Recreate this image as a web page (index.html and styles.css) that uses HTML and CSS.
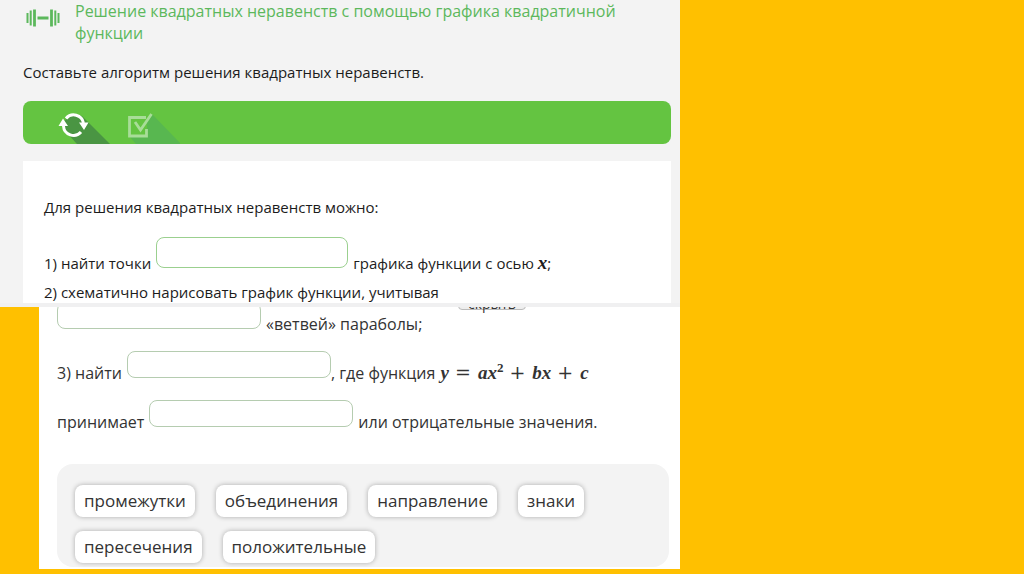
FILE: index.html
```html
<!DOCTYPE html>
<html lang="ru">
<head>
  <meta charset="utf-8">
  <meta name="viewport" content="width=device-width, initial-scale=1.0">
  <title>Решение квадратных неравенств</title>
  <link rel="stylesheet" href="styles.css">
</head>
<body>
  <main class="slide">
    <!-- Задание -->
    <section class="task">
      <header class="task__header">
        <svg class="task__icon" viewBox="0 0 34 18" aria-hidden="true">
          <path d="M1.5 4v10M4.7 1.5v15M29.3 1.5v15M32.5 4v10" />
          <path class="task__grip" d="M8.5 0.5v17M25.5 0.5v17M11.5 9h11" />
        </svg>
        <h1 class="task__title">Решение квадратных неравенств с помощью графика квадратичной функции</h1>
      </header>

      <p class="task__lead">Составьте алгоритм решения квадратных неравенств.</p>

      <div class="toolbar">
        <button class="toolbar__btn" type="button" aria-label="Сбросить">
          <svg viewBox="0 0 54 43" aria-hidden="true">
            <path class="shade-dark" d="M7 29L7 20L16 13L25 15L31 21L53 43H20z" />
            <path class="arc" d="M9 17.5A10 10 0 0 1 26.5 22M24 31A10 10 0 0 1 6.5 25" />
            <path class="tip" d="M1.5 25L6 17.5L11 25zM22 21.5H31.5L27 29z" />
          </svg>
        </button>
        <button class="toolbar__btn" type="button" aria-label="Проверить">
          <svg viewBox="0 0 54 43" aria-hidden="true">
            <path class="shade-light" d="M3 35L26 13L55 43H10z" />
            <path class="check-bg" d="M3 16H21V35H3z" />
            <path class="check" d="M20 16.5H3.5v18.5H20.5V28M9 21L14.5 29L25.5 13" />
          </svg>
        </button>
      </div>

      <div class="card">
        <p class="card__intro">Для решения квадратных неравенств можно:</p>
        <div class="row">
          <label for="gap1">1) найти точки</label>
          <input class="gap" id="gap1" type="text">
          <span>графика функции с осью <i class="var">x</i>;</span>
        </div>
        <p class="card__next">2) схематично нарисовать график функции, учитывая</p>
      </div>
    </section>

    <!-- Продолжение -->
    <section class="rest">
      <button class="rest__hide" type="button">скрыть</button>
      <div class="row">
        <input class="gap" type="text" aria-label="пропуск 2">
        <span>«ветвей» параболы;</span>
      </div>
      <div class="row">
        <label for="gap3">3) найти</label>
        <input class="gap" id="gap3" type="text">
        <span class="tight">, где функция <span class="math"><i>y</i><b>=</b><i>ax</i><sup>2</sup><b>+</b><i>bx</i><b>+</b><i>c</i></span></span>
      </div>
      <div class="row">
        <label for="gap4">принимает</label>
        <input class="gap" id="gap4" type="text">
        <span>или отрицательные значения.</span>
      </div>

      <div class="bank">
        <button class="chip" type="button">промежутки</button>
        <button class="chip" type="button">объединения</button>
        <button class="chip" type="button">направление</button>
        <button class="chip" type="button">знаки</button>
        <button class="chip" type="button">пересечения</button>
        <button class="chip" type="button">положительные</button>
      </div>
    </section>
  </main>
</body>
</html>
```
FILE: styles.css
```css
* {
  margin: 0;
  padding: 0;
  box-sizing: border-box;
}

:root {
  --green: #64c441;
  --grey: #f3f3f3;
}

body {
  min-height: 100vh;
  background: #ffc000;
  color: #1c1c1c;
  font-family: "Open Sans", "Noto Sans", sans-serif;
  font-size: 15px;
  line-height: 22px;
}

button,
input {
  font: inherit;
  color: inherit;
}

.slide {
  width: 66.4%;
}

/* ===== Задание ===== */
.task {
  padding: 0 9px 0 23px;
  background: var(--grey);
  border-bottom: 4px solid #f0f0f1;
}

.task__header {
  display: flex;
  gap: 15px;
  padding-left: 3px;
}

.task__icon {
  flex: none;
  width: 34px;
  height: 18px;
  margin-top: 9px;
  fill: none;
  stroke: #5cb85c;
  stroke-width: 2;
}

.task__grip {
  stroke-width: 2.8;
}

.task__title {
  color: #5cb85c;
  font-size: 16px;
  font-weight: 400;
}

.task__lead {
  margin: 17px 0 18px;
}

.toolbar {
  display: flex;
  gap: 15px;
  height: 43px;
  padding-left: 34px;
  border-radius: 8px;
  background: var(--green);
  overflow: hidden;
}

.toolbar__btn {
  width: 54px;
  border: 0;
  background: none;
}

.toolbar__btn svg {
  display: block;
  width: 54px;
  height: 43px;
}

.shade-dark { fill: #4a9543; }
.shade-light { fill: #58b750; }
.check-bg { fill: var(--green); }
.tip { fill: #fff; }

.arc {
  fill: none;
  stroke: #fff;
  stroke-width: 3;
}

.check {
  fill: none;
  stroke: #a8dd98;
  stroke-width: 2.8;
}

.card {
  margin-top: 17px;
  padding: 35px 21px 0;
  background: #fff;
}

.card__intro {
  margin-bottom: 19px;
}

.card__next {
  margin-top: 7px;
}

/* ===== Строки с пропусками ===== */
.row {
  display: flex;
  align-items: flex-end;
  gap: 5px;
  white-space: nowrap;
}

.gap {
  width: 192px;
  height: 31px;
  margin-bottom: 6px;
  padding: 0 8px;
  border: 1px solid #9bd08f;
  border-radius: 8px;
  background: #fff;
}

.var {
  font-family: "Liberation Serif", serif;
  font-size: 19px;
  font-weight: 700;
  line-height: 1;
}

/* ===== Продолжение ===== */
.rest {
  position: relative;
  margin-left: 39px;
  padding: 0 11px 2px 18px;
  background: #fff;
  color: #333;
  font-size: 16px;
  overflow: hidden;
}

.rest .row {
  margin-bottom: 16px;
}

.rest .row:first-of-type {
  margin-top: -5px;
}

.rest .gap {
  width: 204px;
  height: 27px;
  border-color: #b5ccb0;
}

.rest__hide {
  position: absolute;
  top: -19px;
  left: 419px;
  width: 68px;
  height: 22px;
  padding-top: 5px;
  border: 1px solid #bbb;
  border-radius: 4px;
  background: #eee;
  font-size: 14px;
  line-height: 20px;
}

.tight {
  margin-left: -5px;
}

.math {
  font-family: "Liberation Serif", serif;
  font-size: 19px;
  font-weight: 700;
  line-height: 1;
}

.math b {
  margin: 0 6px;
  font-family: "DejaVu Serif", serif;
  font-weight: 400;
}

.math i {
  margin-left: 1px;
}

.math sup {
  font-size: 13px;
  line-height: 1;
}

.bank {
  display: flex;
  flex-wrap: wrap;
  gap: 14px 21px;
  margin-top: 31px;
  padding: 21px 18px 4px;
  border-radius: 16px;
  background: var(--grey);
}

.chip {
  height: 32px;
  padding: 0 9px;
  border: 0;
  border-radius: 8px;
  background: #fff;
  box-shadow: 0 0 5px rgba(0, 0, 0, 0.3);
  font-size: 17px;
}
```
